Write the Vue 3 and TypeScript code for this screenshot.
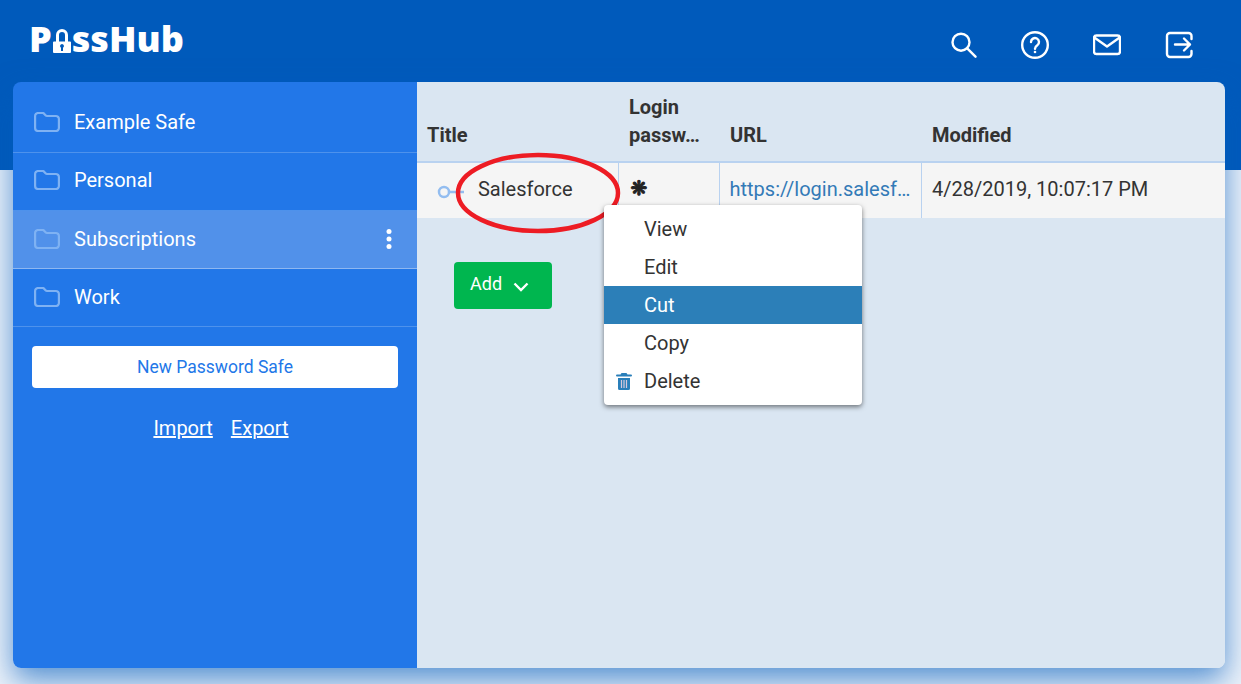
<script setup lang="ts">
interface Safe { name: string; active?: boolean }
const safes: Safe[] = [
  { name: 'Example Safe' },
  { name: 'Personal' },
  { name: 'Subscriptions', active: true },
  { name: 'Work' },
]
const menu: string[] = ['View', 'Edit', 'Cut', 'Copy', 'Delete']
</script>

<template>
  <div class="page">
    <header class="top">
      <div class="logo">
        <span>P</span>
        <svg class="lock" viewBox="0 0 18 25" width="18" height="25">
          <path d="M4.5 14V7a4.5 4.5 0 0 1 9 0V14" fill="none" stroke="#fff" stroke-width="3" />
          <path fill-rule="evenodd" fill="#fff" d="M1 13.500h16a1 1 0 0 1 1 1V24a1 1 0 0 1-1 1H1a1 1 0 0 1-1-1v-9.500a1 1 0 0 1 1-1ZM9 16a2 2 0 0 0-1 3.700V23h2v-3.300A2 2 0 0 0 9 16Z" />
        </svg>
        <span>ssHub</span>
      </div>
      <nav class="tools">
        <svg viewBox="0 0 28 28" class="tool"><circle cx="12" cy="11.200" r="8.500" /><path d="M18.200 17.400l8.300 8.300" /></svg>
        <svg viewBox="0 0 28 28" class="tool"><circle cx="14" cy="14" r="12.800" /><path d="M10 11a4 4 0 1 1 6.300 3.300c-1.500 1-2.300 1.700-2.300 3.400" /><circle class="dot" cx="14" cy="21" r="1.300" /></svg>
        <svg viewBox="0 0 28 28" class="tool"><rect x="1" y="4.500" width="26" height="18.500" rx="2.500" /><path d="M2 7l12 8.500L26 7" /></svg>
        <svg viewBox="0 0 28 28" class="tool"><path d="M26.500 8V5a3 3 0 0 0-3-3H5a3 3 0 0 0-3 3v18a3 3 0 0 0 3 3h18.500a3 3 0 0 0 3-3v-3" /><path d="M10 13.500h15M19 7.500l6 6-6 6" /></svg>
      </nav>
    </header>

    <main class="card">
      <aside class="side">
        <ul class="safes">
          <li v-for="s in safes" :key="s.name" class="safe" :class="{ active: s.active }">
            <svg class="folder" viewBox="0 0 26 20" width="26" height="20">
              <path d="M1.100 4a3 3 0 0 1 3-3h4.500a2 2 0 0 1 1.500.700l1.400 1.600a2 2 0 0 0 1.500.700h8.900a3 3 0 0 1 3 3v9a3 3 0 0 1-3 3H4.100a3 3 0 0 1-3-3Z" />
            </svg>
            <span class="safe-name">{{ s.name }}</span>
            <svg v-if="s.active" class="dots" viewBox="0 0 6 20" width="6" height="20">
              <circle cx="3" cy="2.500" r="2.500" /><circle cx="3" cy="10" r="2.500" /><circle cx="3" cy="17.500" r="2.500" />
            </svg>
          </li>
        </ul>
        <button class="new-safe">New Password Safe</button>
        <div class="links"><a>Import</a><a>Export</a></div>
      </aside>

      <section class="content">
        <table class="items">
          <colgroup>
            <col class="c1" /><col class="c2" /><col class="c3" /><col />
          </colgroup>
          <thead>
            <tr>
              <th>Title</th>
              <th>Login<br />passw…</th>
              <th>URL</th>
              <th>Modified</th>
            </tr>
          </thead>
          <tbody>
            <tr>
              <td class="title-cell">
                <svg class="key" viewBox="0 0 28 14" width="28" height="14">
                  <circle cx="7" cy="7" r="5" /><path d="M12 7h15" />
                </svg>
                Salesforce
              </td>
              <td class="pw">❋</td>
              <td><a class="url">https://login.salesf…</a></td>
              <td class="date">4/28/2019, 10:07:17 PM</td>
            </tr>
          </tbody>
        </table>

        <button class="add">Add
          <svg viewBox="0 0 16 10" width="16" height="10"><path d="M1.500 1.500L8 8l6.500-6.500" /></svg>
        </button>

        <svg class="circle" viewBox="0 0 170 86" width="170" height="86">
          <ellipse cx="85" cy="43" rx="80" ry="38" />
        </svg>

        <ul class="menu">
          <li v-for="m in menu" :key="m" :class="{ hot: m === 'Cut' }">
            <svg v-if="m === 'Delete'" class="trash" viewBox="0 0 16 18" width="16" height="18">
              <path fill="#2a7fba" d="M5.500 1h5l1 1.500H15a.8.800 0 0 1 0 2H1a.8.800 0 0 1 0-2h3.500ZM2 6h12v10.500a1.500 1.500 0 0 1-1.500 1.500h-9A1.500 1.500 0 0 1 2 16.500Z" />
              <path stroke="#d8c8dc" stroke-width="1.200" d="M5.500 8v8M8 8v8M10.500 8v8" />
            </svg>
            {{ m }}
          </li>
        </ul>
      </section>
    </main>
  </div>
</template>

<style>
html, body { margin: 0; padding: 0; overflow: hidden; }
</style>

<style scoped>
.page {
  height: 684px;
  display: flex;
  flex-direction: column;
  background: #edf3fa;
  font-family: Roboto, "Liberation Sans", sans-serif;
  font-size: 20px;
  color: #333;
  overflow: hidden;
}
.top {
  height: 170px;
  flex: none;
  background: #005abb;
  display: flex;
  justify-content: space-between;
  align-items: flex-start;
  padding: 0 48px 0 29px;
  box-sizing: border-box;
}
.logo {
  display: flex;
  align-items: flex-end;
  height: 53px;
  font-family: "Open Sans", sans-serif;
  font-weight: 800;
  font-size: 36px;
  line-height: 1;
  color: #fff;
}
.logo span { position: relative; top: 4px; }
.lock { margin: 0 1px 0 1px; flex: none; }
.tools { display: flex; gap: 44px; margin-top: 31px; }
.tool {
  width: 28px;
  height: 28px;
  fill: none;
  stroke: #fff;
  stroke-width: 2.400;
  stroke-linecap: round;
  stroke-linejoin: round;
}
.tool .dot { fill: #fff; stroke: none; }

.card {
  flex: none;
  height: 586px;
  margin: -88px 16px 0 13px;
  display: flex;
  border-radius: 8px;
  overflow: hidden;
  box-shadow: 0 12px 30px rgba(0, 90, 187, 0.65);
  position: relative;
}
.side {
  width: 404px;
  flex: none;
  background: #2277e8;
  color: #fff;
  padding-top: 13px;
  box-sizing: border-box;
}
.safes { list-style: none; margin: 0; padding: 0; }
.safe {
  height: 58px;
  box-sizing: border-box;
  padding: 0 25px 2px 21px;
  display: flex;
  align-items: center;
  border-bottom: 1px solid rgba(255, 255, 255, 0.2);
}
.safe:nth-child(-n + 2) { padding-bottom: 3px; }
.safe.active { background: #5191ea; border-bottom-color: rgba(255,255,255,.35); }
.folder { fill: none; stroke: #7fb2f3; stroke-width: 2.200; margin-right: 14px; flex: none; }
.safe-name { flex: 1; }
.dots { fill: #fff; }
.new-safe {
  display: block;
  margin: 19px 19px 0;
  width: 366px;
  height: 42px;
  padding: 0 0 1px;
  border: none;
  border-radius: 4px;
  background: #fff;
  color: #2277e8;
  font: 400 17.500px Roboto, sans-serif;
}
.links { display: flex; justify-content: center; gap: 18px; margin-top: 27px; padding-left: 12px; line-height: 26px; }
.links a { color: #fff; text-decoration: underline; }

.content {
  flex: 1;
  background: #dae6f2;
  position: relative;
}
.items { width: 100%; table-layout: fixed; border-collapse: collapse; }
.c1 { width: 201px; }
.c2 { width: 101px; }
.c3 { width: 202px; }
th {
  height: 78px;
  vertical-align: bottom;
  text-align: left;
  padding: 0 10px 12px 11px;
  font-weight: 700;
  line-height: 28px;
  font-size: 20px;
  border-bottom: 2px solid #b9d2f0;
  box-sizing: border-box;
}
th:first-child { padding-left: 10px; }
thead tr { height: 80px; }
td {
  height: 56px;
  padding: 0 10px 4px;
  background: #f5f5f5;
  border-left: 1px solid #b9d2f0;
  box-sizing: border-box;
  white-space: nowrap;
}
td:first-child { border-left: none; }
.title-cell { padding-left: 20px; }
.key {
  vertical-align: -3px;
  margin-right: 8px;
  fill: none;
  stroke: #93bdf0;
  stroke-width: 2.500;
}
.pw {
  padding-left: 12px;
  padding-bottom: 6px;
  font-family: "DejaVu Sans", sans-serif;
  font-size: 20px;
  color: #222;
  -webkit-text-stroke: 1px #222;
}
.date { padding-left: 10.500px; }
.url { color: #337ab7; }
.add {
  display: flex;
  align-items: center;
  gap: 11px;
  position: relative;
  margin: 44px 0 0 37px;
  width: 98px;
  height: 47px;
  padding: 0 0 5px 16px;
  box-sizing: border-box;
  border: none;
  border-radius: 4px;
  background: #00b64f;
  color: #fff;
  font: 400 18px Roboto, sans-serif;
}
.add svg { fill: none; stroke: #fff; stroke-width: 2.400; position: relative; top: 4px; }
.circle {
  position: absolute;
  left: 36px;
  top: 68px;
  fill: none;
  stroke: #ed1c24;
  stroke-width: 4.500;
}
.menu {
  position: absolute;
  left: 187px;
  top: 123px;
  width: 258px;
  margin: 0;
  padding: 5px 0;
  list-style: none;
  background: #fff;
  border-radius: 4px;
  box-shadow: 0 2px 5px rgba(0, 0, 0, 0.5);
}
.menu li {
  height: 38px;
  line-height: 38px;
  padding-left: 40px;
  position: relative;
}
.menu li.hot { background: #2c7fb8; color: #fff; }
.trash { position: absolute; left: 12px; top: 10px; }
</style>
